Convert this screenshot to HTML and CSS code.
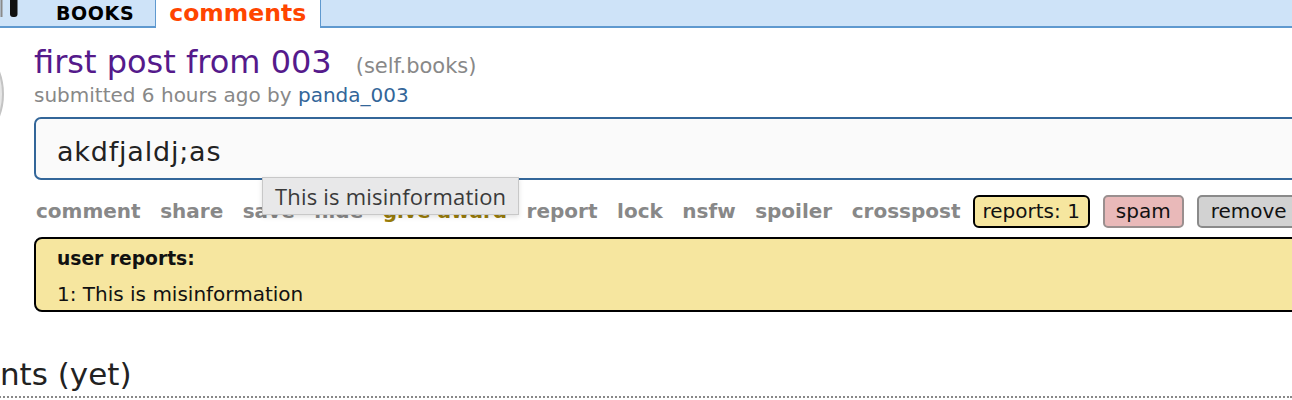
FILE: index.html
```html
<!DOCTYPE html>
<html lang="en">
<head>
<meta charset="utf-8">
<title>first post from 003 : books</title>
<link rel="stylesheet" href="styles.css">
</head>
<body>
<header class="hdr">
  <svg class="logo" width="40" height="26" viewBox="0 0 40 26" aria-hidden="true">
    <rect x="0.5" y="0" width="2" height="17" fill="#8a8a8a"/>
    <rect x="10" y="-4" width="7.5" height="21" rx="3" fill="#111"/>
  </svg>
  <span class="pagename">BOOKS</span>
  <span class="tab">comments</span>
</header>

<div class="main">
  <div class="thumb"></div>
  <div class="entry">
    <p class="title"><a class="title-link">first post from 003</a><span class="domain">(self.books)</span></p>
    <p class="tagline">submitted 6 hours ago by <a class="author">panda_003</a></p>
    <div class="usertext">akdfjaldj;as</div>
    <div class="actions">
      <ul class="flat-list">
        <li>comment</li>
        <li>share</li>
        <li>save</li>
        <li>hide</li>
        <li class="gild">give award</li>
        <li>report</li>
        <li>lock</li>
        <li>nsfw</li>
        <li>spoiler</li>
        <li>crosspost</li>
      </ul>
      <div class="mod-buttons">
        <span class="btn btn-reports">reports: 1</span>
        <span class="btn btn-spam">spam</span>
        <span class="btn btn-remove">remove</span>
      </div>
    </div>
    <div class="reports">
      <div class="reports-title">user reports:</div>
      <div class="report-item">1: This is misinformation</div>
    </div>
  </div>
</div>

<h2 class="comments-head">no comments (yet)</h2>

<div class="tooltip">This is misinformation</div>
</body>
</html>
```

FILE: styles.css
```css
html, body {
  margin: 0;
  padding: 0;
}

body {
  position: relative;
  width: 1292px;
  height: 400px;
  overflow: hidden;
  background: #fff;
  font-family: "DejaVu Sans", Verdana, sans-serif;
  color: #222;
}

/* header */
.hdr {
  display: flex;
  align-items: flex-start;
  height: 26px;
  background: #cee3f8;
  border-bottom: 2px solid #5f99cf;
}

.logo {
  flex: none;
  display: block;
}

.pagename {
  margin-left: 16px;
  font-weight: bold;
  font-size: 19px;
  letter-spacing: 0.6px;
  line-height: 26px;
  color: #000;
}

.tab {
  margin-left: 21px;
  height: 26px;
  padding: 0 14px 2px 13px;
  margin-bottom: -2px;
  background: #fff;
  border: 1px solid #5f99cf;
  border-top: none;
  border-bottom: none;
  font-weight: bold;
  font-size: 23.5px;
  line-height: 26px;
  color: #ff4500;
}

/* main entry */
.main {
  display: flex;
  align-items: flex-start;
}

.thumb {
  flex: none;
  box-sizing: border-box;
  width: 124px;
  height: 124px;
  margin-left: -120px;
  margin-top: 4px;
  border-radius: 50%;
  background: #e6e6e6;
  border: 2px solid #c4c4c4;
}

.entry {
  flex: none;
  width: 1400px;
  margin-left: 30px;
}

.title {
  margin: 18px 0 0;
  font-size: 32px;
  line-height: 32px;
  white-space: nowrap;
}

.title-link {
  color: #551a8b;
}

.domain {
  margin-left: 24px;
  font-size: 21px;
  line-height: 20px;
  color: #888;
}

.tagline {
  margin: 5px 0 0;
  font-size: 20px;
  line-height: 24px;
  color: #888;
}

.author {
  color: #369;
}

.usertext {
  margin-top: 10px;
  height: 53px;
  padding: 6px 0 0 21px;
  background: #fafafa;
  border: 2px solid #369;
  border-radius: 7px;
  font-size: 27px;
  letter-spacing: 0.8px;
  line-height: 53px;
  color: #222;
}

.actions {
  display: flex;
  align-items: center;
  gap: 12px;
  height: 33px;
  margin-top: 15px;
}

.flat-list {
  display: flex;
  gap: 19.5px;
  margin: 0;
  padding: 0 0 0 2px;
  list-style: none;
  font-weight: bold;
  font-size: 20px;
  line-height: 33px;
  color: #888;
}

.flat-list .gild {
  color: #9a7d0a;
}

.mod-buttons {
  display: flex;
  gap: 13px;
}

.btn {
  box-sizing: border-box;
  display: block;
  height: 33px;
  font-size: 20px;
  line-height: 29px;
  color: #111;
  white-space: nowrap;
}

.btn-reports {
  padding: 0 8px;
  background: #f6e69f;
  border: 2px solid #000;
  border-radius: 6px;
}

.btn-spam {
  padding: 0 11px;
  background: #e9b9b9;
  border: 2px solid #9a8f8f;
  border-radius: 5px;
}

.btn-remove {
  padding: 0 12px;
  background: #d2d2d2;
  border: 2px solid #8a8a8a;
  border-radius: 5px;
}

.reports {
  margin-top: 9px;
  padding: 8px 0 4px 21px;
  background: #f6e69f;
  border: 2px solid #000;
  border-radius: 8px;
  color: #111;
}

.reports-title {
  font-weight: bold;
  font-size: 18.7px;
  line-height: 24px;
}

.report-item {
  margin-top: 11px;
  font-size: 20px;
  line-height: 24px;
}

/* comments heading */
.comments-head {
  margin: 44px 0 0 -164px;
  padding-bottom: 4px;
  font-weight: normal;
  font-size: 31px;
  line-height: 36px;
  color: #222;
  border-bottom: 2px dotted #888;
  white-space: nowrap;
}

/* hover tooltip */
.tooltip {
  position: absolute;
  left: 262px;
  top: 177px;
  height: 36px;
  padding: 0 12px;
  background: #e8e8e9;
  border: 1px solid #c8c8c8;
  box-shadow: 0 2px 5px rgba(0, 0, 0, 0.12);
  font-family: "Open Sans", "Noto Sans", sans-serif;
  font-size: 22px;
  letter-spacing: 0.2px;
  line-height: 36px;
  color: #3a3a3a;
  white-space: nowrap;
}
```
